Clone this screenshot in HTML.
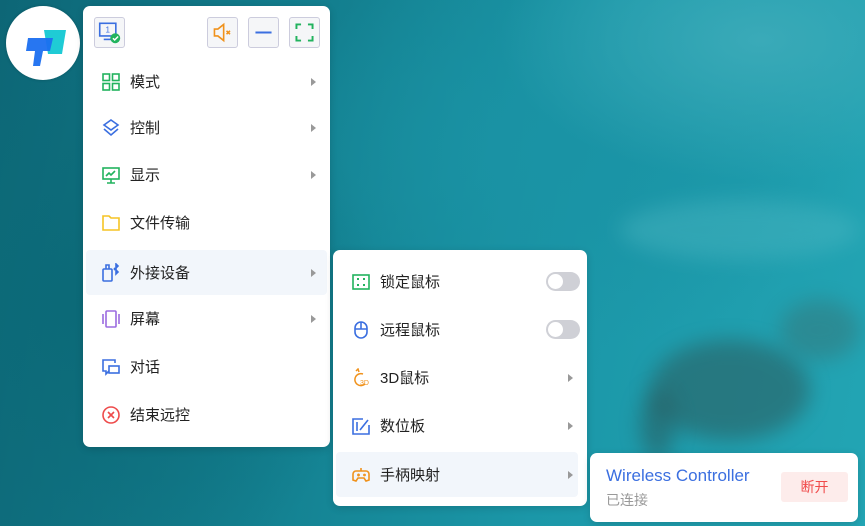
<!DOCTYPE html>
<html><head><meta charset="utf-8"><style>
*{margin:0;padding:0;box-sizing:border-box}
body{width:865px;height:526px;overflow:hidden;position:relative;font-family:"Liberation Sans","Noto Sans CJK SC",sans-serif;
background:
radial-gradient(ellipse 260px 140px at 760px 40px,#3aaab8 0%,rgba(58,170,184,0) 100%),
radial-gradient(ellipse 300px 200px at 560px 150px,#1a93a5 0%,rgba(26,147,165,0) 100%),
radial-gradient(ellipse 300px 300px at 80px 300px,#0c6a78 0%,rgba(12,106,120,0) 100%),
linear-gradient(100deg,#0d6676 0%,#137f8f 35%,#1b97a8 65%,#23a5b4 100%);}
.blob{position:absolute;border-radius:50%;filter:blur(10px)}
.menu{position:absolute;background:#fff;border-radius:7px;box-shadow:0 2px 8px rgba(0,0,0,.15)}
.row{position:absolute;left:3px;right:3px;height:45px;display:flex;align-items:center;font-size:15px;color:#222;border-radius:4px}
.row.hl{background:#f2f6fb}
.row svg{position:absolute;left:15px;width:20px;height:20px}
.row span{position:absolute;left:44px}
.arr{position:absolute;right:11px;width:0;height:0;border-left:5px solid #999;border-top:4.5px solid transparent;border-bottom:4.5px solid transparent}
.tb{position:absolute;top:11px;width:31px;height:31px;border:1px solid #ccd;border-radius:3px;background:#f5f6f8}
.tb svg{position:absolute;left:3px;top:3px;width:23px;height:23px}
.tog{position:absolute;right:4px;width:34px;height:19px;border-radius:10px;background:#cfd0d6}
.tog:after{content:"";position:absolute;left:2px;top:2px;width:15px;height:15px;border-radius:50%;background:#fff}
</style></head><body>
<div class="blob" style="left:650px;top:340px;width:160px;height:100px;background:#2c5a5c;opacity:.55"></div>
<div class="blob" style="left:640px;top:390px;width:35px;height:70px;background:#2a5355;opacity:.5"></div>
<div class="blob" style="left:780px;top:300px;width:80px;height:60px;background:#3a6a6a;opacity:.4"></div>
<div class="blob" style="left:620px;top:200px;width:240px;height:60px;background:#4fb9c4;opacity:.4"></div>

<div style="position:absolute;left:6px;top:6px;width:74px;height:74px;border-radius:50%;background:#fff;box-shadow:0 0 3px rgba(0,0,0,.2)">
<svg width="74" height="74" viewBox="0 0 74 74"><path d="M38 24 L60 24 L56 48 L42 48 Z" fill="#1fcbd5"/><path d="M22 32 L47 32 L44 45 L37 45 L34 60 L27 60 L29 45 L20 45 Z" fill="#1b6ff0" opacity=".95"/></svg></div>

<div class="menu" style="left:83px;top:6px;width:247px;height:441px">
<div class="tb" style="left:11px"><svg viewBox="0 0 20 20"><rect x="1.5" y="2" width="14" height="11" fill="none" stroke="#3b6fe0" stroke-width="1.4"/><text x="6.5" y="10" font-size="7" fill="#3b6fe0" font-family="Liberation Sans">1</text><path d="M5 16h7" stroke="#3b6fe0" stroke-width="1.4"/><circle cx="15" cy="15" r="4.3" fill="#22b35e"/><path d="M13 15l1.5 1.5 3-3" stroke="#fff" fill="none" stroke-width="1.3"/></svg></div>
<div class="tb" style="left:124px"><svg viewBox="0 0 20 20"><path d="M3 7h3l5-4v14l-5-4H3z" fill="none" stroke="#f0921c" stroke-width="1.4"/><path d="M13.5 8.5l3 3M16.5 8.5l-3 3" stroke="#f0921c" stroke-width="1.4"/></svg></div>
<div class="tb" style="left:165px"><svg viewBox="0 0 20 20"><path d="M3 10h14" stroke="#3b6fe0" stroke-width="1.8"/></svg></div>
<div class="tb" style="left:206px"><svg viewBox="0 0 20 20"><path d="M3 7V3h4M13 3h4v4M17 13v4h-4M7 17H3v-4" fill="none" stroke="#22b35e" stroke-width="1.7"/></svg></div>

<div class="row" style="top:53px"><svg viewBox="0 0 20 20"><g fill="none" stroke="#22b35e" stroke-width="1.6"><rect x="2" y="2" width="6.5" height="6.5"/><rect x="11.5" y="2" width="6.5" height="6.5"/><rect x="2" y="11.5" width="6.5" height="6.5"/><rect x="11.5" y="11.5" width="6.5" height="6.5"/></g></svg><span>模式</span><i class="arr"></i></div>
<div class="row" style="top:99px"><svg viewBox="0 0 20 20"><g fill="none" stroke="#3b6fe0" stroke-width="1.6"><path d="M10 2l7 5-7 5-7-5z"/><path d="M3 11l7 6 7-6"/></g></svg><span>控制</span><i class="arr"></i></div>
<div class="row" style="top:146px"><svg viewBox="0 0 20 20"><g fill="none" stroke="#22b35e" stroke-width="1.6"><rect x="2" y="3" width="16" height="11"/><path d="M6 18h8M10 14v4M5 11l3-3 2 2 4-4"/></g></svg><span>显示</span><i class="arr"></i></div>
<div class="row" style="top:194px"><svg viewBox="0 0 20 20"><path d="M2 3h6l2 2h8v12H2z" fill="none" stroke="#f5c425" stroke-width="1.6"/></svg><span>文件传输</span></div>
<div class="row hl" style="top:244px"><svg viewBox="0 0 20 20"><g fill="none" stroke="#3b6fe0" stroke-width="1.6"><rect x="2" y="6" width="9" height="12" rx="1"/><path d="M5 6V2h3v4"/><path d="M13 5l4 4-2 2V1l2 2-4 4"/></g></svg><span>外接设备</span><i class="arr"></i></div>
<div class="row" style="top:290px"><svg viewBox="0 0 20 20"><g fill="none" stroke="#9b6be0" stroke-width="1.6"><rect x="5" y="2" width="10" height="16" rx="1"/><path d="M2 5v10M18 5v10"/></g></svg><span>屏幕</span><i class="arr"></i></div>
<div class="row" style="top:338px"><svg viewBox="0 0 20 20"><g fill="none" stroke="#3b6fe0" stroke-width="1.6"><path d="M14 6V3H2v11h3v3l3-3"/><rect x="8" y="9" width="10" height="7"/></g></svg><span>对话</span></div>
<div class="row" style="top:386px"><svg viewBox="0 0 20 20"><g fill="none" stroke="#ee4b4b" stroke-width="1.6"><circle cx="10" cy="10" r="8"/><path d="M7 7l6 6M13 7l-6 6"/></g></svg><span>结束远控</span></div>
</div>

<div class="menu" style="left:333px;top:250px;width:254px;height:256px">
<div class="row" style="top:9px"><svg viewBox="0 0 20 20"><g fill="none" stroke="#22b35e" stroke-width="1.6"><rect x="2" y="3" width="16" height="14"/></g><g fill="#22b35e"><rect x="6" y="6" width="2" height="2"/><rect x="12" y="6" width="2" height="2"/><rect x="6" y="12" width="2" height="2"/><rect x="12" y="12" width="2" height="2"/></g></svg><span>锁定鼠标</span><i class="tog"></i></div>
<div class="row" style="top:57px"><svg viewBox="0 0 20 20"><g fill="none" stroke="#3b6fe0" stroke-width="1.6"><rect x="4" y="2" width="12" height="16" rx="6"/><path d="M4 9h12M10 2v7"/></g></svg><span>远程鼠标</span><i class="tog"></i></div>
<div class="row" style="top:105px"><svg viewBox="0 0 20 20"><g fill="none" stroke="#f0921c" stroke-width="1.5"><path d="M12 6a6 6 0 1 0 2 10"/><path d="M5 3l2-2 1 3"/></g><text x="9" y="17" font-size="7" fill="#f0921c" font-family="Liberation Sans">3D</text></svg><span>3D鼠标</span><i class="arr"></i></div>
<div class="row" style="top:153px"><svg viewBox="0 0 20 20"><g fill="none" stroke="#3b6fe0" stroke-width="1.6"><path d="M12 3H2v15h16V9"/><path d="M6 6v9M9 14l8-10"/></g></svg><span>数位板</span><i class="arr"></i></div>
<div class="row hl" style="top:202px;right:9px"><svg viewBox="0 0 20 20"><g fill="none" stroke="#f0921c" stroke-width="1.6"><path d="M5 6h10a3 3 0 0 1 3 3v6l-3 1-2-3H7l-2 3-3-1V9a3 3 0 0 1 3-3z"/><path d="M10 6V3M6 10h3M7.5 8.5v3"/><circle cx="13.5" cy="10" r=".6"/></g></svg><span>手柄映射</span><i class="arr" style="right:5px"></i></div>
</div>

<div class="menu" style="left:590px;top:453px;width:268px;height:69px">
<div style="position:absolute;left:16px;top:13px;font-size:17px;color:#3b6fe0">Wireless Controller</div>
<div style="position:absolute;left:16px;top:37px;font-size:14px;color:#999">已连接</div>
<div style="position:absolute;left:191px;top:19px;width:67px;height:30px;background:#fdeceb;border-radius:3px;color:#f04a4a;font-size:14px;text-align:center;line-height:30px">断开</div>
</div>
</body></html>
